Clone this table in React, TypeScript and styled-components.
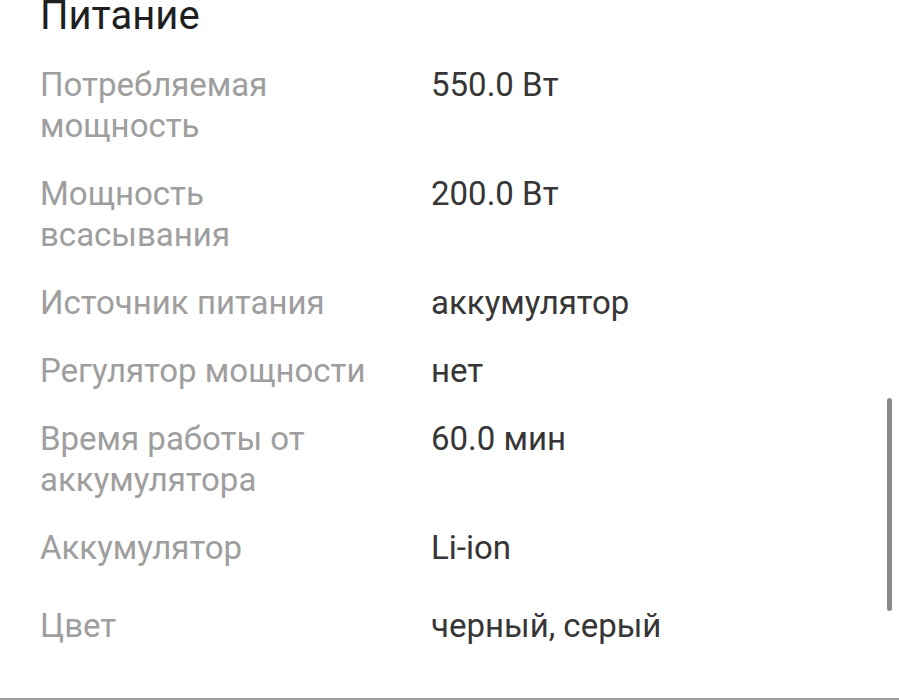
import React from "react";
import styled, { createGlobalStyle } from "styled-components";

const Global = createGlobalStyle`
  html, body { margin: 0; padding: 0; background: #ffffff; }
  body { font-family: Roboto, "Noto Sans", "Liberation Sans", sans-serif; }
  * { box-sizing: border-box; }
`;

const Page = styled.div`
  position: relative;
  height: 700px;
  padding: 0 40px;
  border-bottom: 2px solid #9a9a9a;
  overflow: hidden;
`;

const Title = styled.h2`
  margin: 0 0 18px;
  font-size: 40px;
  line-height: 32px;
  font-weight: 400;
  color: #1f1f1f;
`;

const List = styled.dl`
  margin: 0;
  display: flex;
  flex-direction: column;
`;

const Row = styled.div<{ $extra?: number }>`
  display: grid;
  grid-template-columns: 360px 1fr;
  column-gap: 31px;
  padding: ${(p) => 13.5 + (p.$extra || 0)}px 0 13.5px;
  font-size: 33px;
  line-height: 41px;
`;

const Label = styled.dt`
  margin: 0;
  color: #9e9e9e;
`;

const Value = styled.dd`
  margin: 0;
  color: #363636;
`;

const ScrollThumb = styled.div`
  position: absolute;
  left: 887px;
  top: 398px;
  width: 5px;
  height: 213px;
  border-radius: 3px;
  background: #8a8a8a;
`;

const rows: [string, string][] = [
  ["Потребляемая мощность", "550.0 Вт"],
  ["Мощность всасывания", "200.0 Вт"],
  ["Источник питания", "аккумулятор"],
  ["Регулятор мощности", "нет"],
  ["Время работы от аккумулятора", "60.0 мин"],
  ["Аккумулятор", "Li-ion"],
  ["Цвет", "черный, серый"],
];

export default function App() {
  return (
    <Page>
      <Global />
      <Title>Питание</Title>
      <List>
        {rows.map(([l, v], i) => (
          <Row key={l} $extra={i === rows.length - 1 ? 10 : 0}>
            <Label>{l}</Label>
            <Value>{v}</Value>
          </Row>
        ))}
      </List>
      <ScrollThumb />
    </Page>
  );
}
